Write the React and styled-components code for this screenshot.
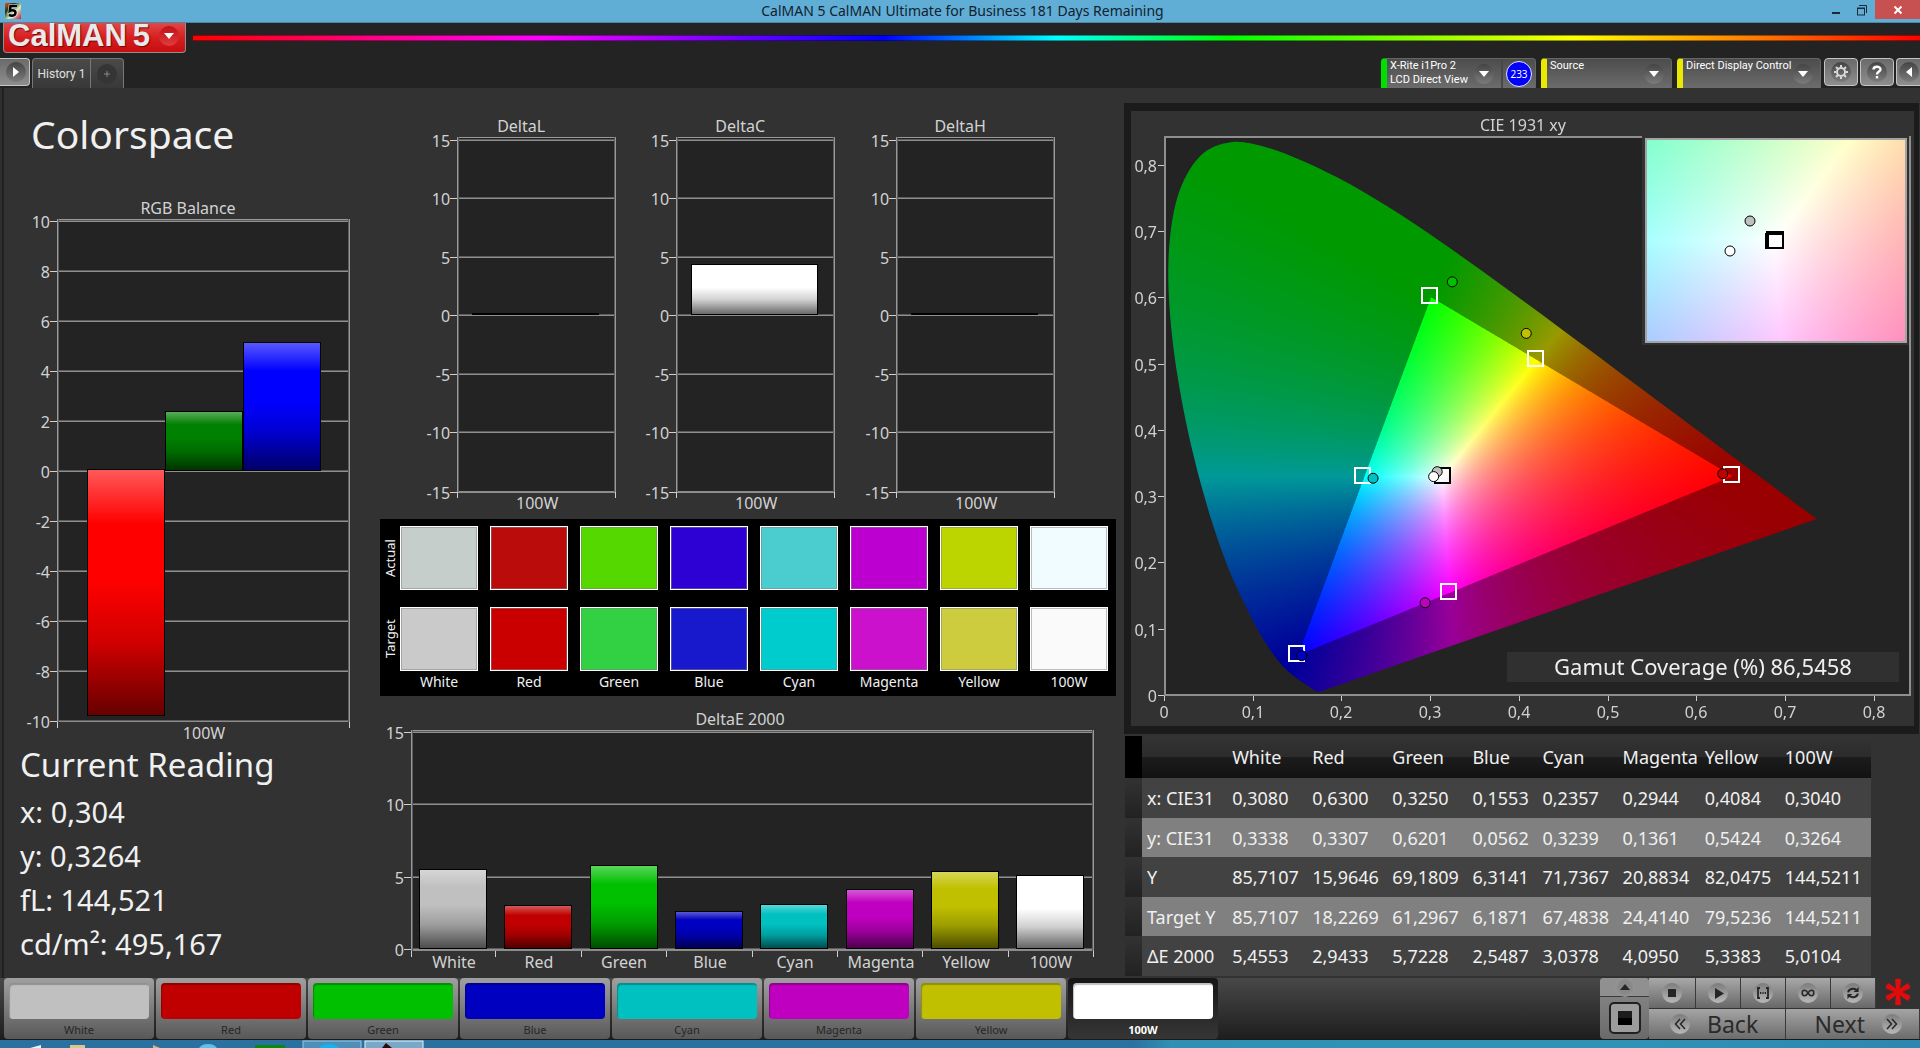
import React, { useEffect, useRef } from "react";
import styled, { createGlobalStyle, css } from "styled-components";

const FONT = '"Noto Sans", "Open Sans", "Liberation Sans", sans-serif';
const COMPACT_FONT = 'Roboto, "Liberation Sans", sans-serif';

const GlobalStyle = createGlobalStyle`
  *, *::before, *::after { box-sizing: border-box; }
  html, body { margin: 0; padding: 0; background: #323232; }
  body { font-family: ${FONT}; color: #f0f0f0; }
  button { font-family: inherit; cursor: pointer; margin: 0; padding: 0; }
  h1, h2, p { margin: 0; font-weight: 400; }
  svg { display: block; }
`;

const Screen = styled.div`
  display: flex;
  flex-direction: column;
  height: 100vh;
  overflow: hidden;
`;

/* ---------- window title bar ---------- */

const TitleBar = styled.div`
  flex: none;
  display: grid;
  grid-template-columns: 1fr auto 1fr;
  height: 23px;
  padding-left: 5px;
  background: #60aed6;
  border-bottom: 1px solid #4a86a6;
  color: #10222e;
  font-size: 14px;
  line-height: 22px;
`;

const AppIcon = styled.svg`
  width: 16px;
  height: 16px;
  margin-top: 3px;
`;

const WindowButtons = styled.div`
  display: flex;
  justify-content: flex-end;
`;

const WindowButton = styled.button`
  display: flex;
  align-items: center;
  justify-content: center;
  width: ${(p) => (p.$close ? 45 : 26)}px;
  height: 19px;
  border: 0;
  background: ${(p) => (p.$close ? "#c75050" : "transparent")};
`;

/* ---------- header ---------- */

const Header = styled.header`
  flex: none;
  height: 65px;
  background: #232323;
`;

const BrandRow = styled.div`
  display: flex;
  height: 30px;
  padding-left: 3px;
`;

const BrandButton = styled.button`
  flex: none;
  display: flex;
  align-items: center;
  justify-content: space-between;
  width: 183px;
  height: 30px;
  padding: 0 6px 3px 4px;
  border: 1px solid #8f8f8f;
  border-top: 0;
  border-radius: 0 0 4px 4px;
  background: linear-gradient(#e04848, #d62020 50%, #c80c10);
`;

const BrandName = styled.span`
  display: flex;
  gap: 6px;
  font-family: "Liberation Sans", Arial, sans-serif;
  font-size: 31px;
  line-height: 26px;
  font-weight: 700;
  color: #e9e9e9;
  white-space: nowrap;
  text-shadow: 1px 1px 1px #6d0a0a;
`;

const Rainbow = styled.div`
  flex: 1;
  height: 6px;
  margin: 12px 0 0 7px;
  border: solid rgba(0, 0, 0, 0.4);
  border-width: 1px 0;
  background: linear-gradient(
    90deg,
    #ff0000 0%,
    #ff00ff 20%,
    #0000ff 40%,
    #00ffff 50%,
    #00ff00 60%,
    #ffff00 80%,
    #ff0000 100%
  );
`;

const ToolRow = styled.div`
  display: flex;
  align-items: flex-start;
  height: 35px;
  padding-top: 5px;
`;

const Disc = styled.span`
  flex: none;
  display: flex;
  align-items: center;
  justify-content: center;
  width: 20px;
  height: 20px;
  border-radius: 50%;
  background: ${(p) => p.$fill || "linear-gradient(#444444, #7c7c7c)"};
`;

const SquareButton = styled.button`
  flex: none;
  display: flex;
  align-items: center;
  justify-content: ${(p) => (p.$edge ? "flex-end" : "center")};
  width: ${(p) => p.$width || 34}px;
  height: 28px;
  padding-right: ${(p) => (p.$edge ? 3 : 0)}px;
  border: 1px solid #c4c4c4;
  border-width: ${(p) => (p.$edge ? "1px 1px 1px 0" : p.$clip ? "1px 0 1px 1px" : "1px")};
  border-radius: ${(p) => (p.$edge ? "0 4px 4px 0" : p.$clip ? "4px 0 0 4px" : "4px")};
  background: linear-gradient(#6a6a6a, #8e8e8e);
`;

const Tabs = styled.nav`
  display: flex;
  height: 30px;
  margin-left: 2px;
  border: 1px solid #777777;
  border-bottom: 0;
  border-radius: 4px 4px 0 0;
  background: linear-gradient(#4a4a4a, #383838);
`;

const TabButton = styled.button`
  display: flex;
  align-items: center;
  justify-content: center;
  width: ${(p) => p.$width}px;
  border: 0;
  border-right: ${(p) => (p.$divided ? "1px solid #777777" : "0")};
  background: none;
  color: #e0e0e0;
  font-family: ${COMPACT_FONT};
  font-size: 12px;
`;

const Spacer = styled.div`
  flex: 1;
  min-width: 0;
`;

const DeviceGroup = styled.div`
  display: flex;
  gap: 5px;
  margin-right: 3px;
`;

const Device = styled.div`
  display: flex;
  width: ${(p) => p.$width}px;
  height: 30px;
  border: 1px solid #666666;
  border-bottom: 0;
  border-left: 6px solid ${(p) => p.$mark};
  border-radius: 4px 4px 0 0;
  background: linear-gradient(#4c4c4c, #6c6c6c);
`;

const DeviceMenu = styled.button`
  flex: 1;
  display: flex;
  align-items: flex-start;
  justify-content: space-between;
  min-width: 0;
  padding: 0 7px 0 3px;
  border: 0;
  background: none;
  color: #ffffff;
  text-align: left;
  font-family: ${COMPACT_FONT};
  font-size: 11px;
  line-height: 14px;
  white-space: nowrap;

  ${Disc} {
    margin-top: 5px;
  }
`;

const MeterBadge = styled.button`
  flex: none;
  display: flex;
  align-items: center;
  justify-content: center;
  width: 34px;
  border: 0;
  border-left: 2px solid #484848;
  background: none;

  span {
    width: 26px;
    height: 26px;
    border: 1px solid #e6e6ff;
    border-radius: 50%;
    background: #0000ff;
    color: #ffffff;
    font-size: 10px;
    line-height: 24px;
    text-align: center;
  }
`;

const EdgeButtons = styled.div`
  display: flex;
  gap: 2px;
`;

/* ---------- main work area ---------- */

const Main = styled.main`
  flex: 1;
  min-height: 0;
  display: grid;
  grid-template-columns: minmax(0, 376fr) minmax(0, 744fr) minmax(0, 796fr);
  align-items: start;
  padding-left: 4px;
  background: #323232;
  box-shadow: inset 2px 0 #2e2e2e, inset 4px 0 #212121;
`;

const Column = styled.section`
  padding-top: ${(p) => p.$top}px;
  padding-right: ${(p) => p.$right || 0}px;
`;

const PageTitle = styled.h1`
  padding-left: 27px;
  margin-bottom: 32px;
  font-size: 39px;
  line-height: 48px;
`;

const Figure = styled.svg`
  width: 100%;
  height: auto;
  font-family: ${FONT};
  font-size: 16px;
`;

const Readings = styled.div`
  padding-left: 16px;
  font-size: 29px;
  line-height: 44px;

  h2 {
    margin-bottom: 5px;
    font-size: 33px;
    line-height: 40px;
  }
`;

const DeltaRow = styled.div`
  display: grid;
  grid-template-columns: repeat(3, minmax(0, 1fr));
  margin: 0 44px 4px 34px;
`;

const SwatchPanel = styled.div`
  display: grid;
  grid-template-columns: 8px repeat(8, minmax(0, 1fr));
  column-gap: 12px;
  padding: 7px 8px 3px 0;
  margin-bottom: 6px;
  background: #000000;
  font-size: 14px;
`;

const SideLabel = styled.span`
  display: flex;
  align-items: center;
  justify-content: center;
  width: 20px;
  height: 64px;
  writing-mode: vertical-rl;
  transform: rotate(180deg);
  font-size: 13px;
`;

const Swatch = styled.div`
  height: 64px;
  margin-bottom: ${(p) => (p.$last ? 0 : 17)}px;
  border: 1px solid #ffffff;
  background: ${(p) => p.$color};
  box-shadow: inset 0 0 0 1px rgba(128, 128, 128, 0.5);
`;

const SwatchName = styled.span`
  line-height: 22px;
  text-align: center;
`;

const CiePanel = styled.div`
  position: relative;
  margin-right: 1px;
  border: solid #1b1b1b;
  border-width: 8px 5px 8px 7px;
  background: #323232;
`;

const CieLayer = styled.canvas`
  position: absolute;
  inset: 0;
  width: 100%;
  height: 100%;
`;

const CieFigure = styled(Figure)`
  position: relative;
`;

const DataTable = styled.table`
  width: calc(100% - 50px);
  margin: 2px 0 0 1px;
  table-layout: fixed;
  border-collapse: collapse;
  font-size: 18px;
  line-height: 24px;
  white-space: nowrap;

  th, td {
    height: 40px;
    padding: 0 0 0 5px;
    font-weight: 400;
    text-align: left;
  }

  thead th {
    height: 42px;
    background: linear-gradient(#333333, #2c2c2c 50%, #1c1c1c 50%, #121212);
  }

  thead td {
    background: #000000;
  }

  tbody tr { background: #424242; }
  tbody tr:nth-child(even) { background: #808080; }
  tbody tr:nth-child(even) > * { height: 39px; }
  tbody td:first-child { background: linear-gradient(#323232, #222222); }
`;

/* ---------- bottom bar ---------- */

const Footer = styled.footer`
  flex: none;
  display: flex;
  height: 62px;
  padding-left: 4px;
  background: linear-gradient(#484848, #1e1e1e);
  border-bottom: 1px solid #1a1a1a;
`;

const PatchList = styled.div`
  display: flex;
  flex: 0 1 1214px;
  gap: 2px;
  min-width: 0;
`;

const PatchButton = styled.button`
  flex: 1;
  min-width: 0;
  padding: 5px 5px 0;
  border: 0;
  border-radius: 4px;
  font-size: 11px;
  line-height: 20px;
  ${(p) =>
    p.$active
      ? css`
          background: linear-gradient(#161616, #363636);
          color: #ffffff;
          font-weight: 700;
        `
      : css`
          background: linear-gradient(#a0a0a0, #585858);
          color: #262626;
        `}
`;

const PatchColor = styled.span`
  display: block;
  height: 36px;
  margin-bottom: 1px;
  border-radius: 4px;
  background: ${(p) => p.$color};
  box-shadow: inset 1px 2px 1px rgba(0, 0, 0, 0.25);
`;

const SourceToggle = styled.div`
  flex: none;
  display: flex;
  flex-direction: column;
  width: 49px;
  border-radius: 4px;
  overflow: hidden;
  background: linear-gradient(#8c8c8c, #6a6a6a);
`;

const ToggleUp = styled.button`
  display: flex;
  align-items: center;
  justify-content: center;
  height: 19px;
  border: 0;
  border-bottom: 1px solid #3a3a3a;
  background: #909090;
`;

const TogglePattern = styled.button`
  display: flex;
  align-items: center;
  justify-content: center;
  align-self: center;
  width: 32px;
  height: 32px;
  margin-top: 5px;
  border: 2px solid #202020;
  border-radius: 5px;
  background: #9c9c9c;
`;

const Transport = styled.div`
  flex: none;
  display: flex;
  flex-direction: column;
  gap: 1px;
  width: 271px;
`;

const TransportTop = styled.div`
  display: grid;
  grid-template-columns: 47px 45px 45px 45px 45px 1fr;
  height: 30px;
  background: #323232;
`;

const TransportButton = styled.button`
  display: flex;
  align-items: center;
  justify-content: center;
  border: 0;
  border-right: 1px solid #3a3a3a;
  background: linear-gradient(#a8a8a8, #686868);
`;

const AlertMark = styled.div`
  display: flex;
  justify-content: center;
`;

const StepRow = styled.div`
  display: grid;
  grid-template-columns: 137px 1fr;
  height: 30px;
`;

const StepButton = styled.button`
  display: flex;
  align-items: center;
  justify-content: ${(p) => (p.$next ? "flex-end" : "flex-start")};
  gap: 17px;
  padding: 0 17px 0 21px;
  border: 0;
  border-right: 1px solid #3a3a3a;
  background: linear-gradient(#a4a4a4, #6c6c6c);
  color: #2a2a2a;
  font-size: 23px;
  line-height: 28px;
`;

const TaskBar = styled.div`
  flex: none;
  height: 8px;
  overflow: hidden;
  background: linear-gradient(90deg, #2a719f 0%, #2a729f 59%, #2f90b4 61%, #3093b6 84%, #2d87b0 100%);
`;

/* ---------- data ---------- */

const PATCHES = [
  { name: "White", color: "#c0c0c0", actual: "#c5ceca", target: "#cacaca", x: "0,3080", y: "0,3338", Y: "85,7107", tY: "85,7107", dE: "5,4553" },
  { name: "Red", color: "#c00000", actual: "#ba0c0a", target: "#ca0000", x: "0,6300", y: "0,3307", Y: "15,9646", tY: "18,2269", dE: "2,9433" },
  { name: "Green", color: "#00c000", actual: "#55d700", target: "#32d043", x: "0,3250", y: "0,6201", Y: "69,1809", tY: "61,2967", dE: "5,7228" },
  { name: "Blue", color: "#0000c0", actual: "#2d00d4", target: "#1818cc", x: "0,1553", y: "0,0562", Y: "6,3141", tY: "6,1871", dE: "2,5487" },
  { name: "Cyan", color: "#00c0c0", actual: "#4bcdd0", target: "#00cccd", x: "0,2357", y: "0,3239", Y: "71,7367", tY: "67,4838", dE: "3,0378" },
  { name: "Magenta", color: "#c000c0", actual: "#bb00cf", target: "#cb11cb", x: "0,2944", y: "0,1361", Y: "20,8834", tY: "24,4140", dE: "4,0950" },
  { name: "Yellow", color: "#c0c000", actual: "#bcd500", target: "#cccc3e", x: "0,4084", y: "0,5424", Y: "82,0475", tY: "79,5236", dE: "5,3383" },
  { name: "100W", color: "#ffffff", actual: "#f0fcff", target: "#fafafa", x: "0,3040", y: "0,3264", Y: "144,5211", tY: "144,5211", dE: "5,0104" },
];

const TABLE_ROWS = [
  ["x: CIE31", "x"],
  ["y: CIE31", "y"],
  ["Y", "Y"],
  ["Target Y", "tY"],
  ["ΔE 2000", "dE"],
];

const COLUMN_WIDTHS = [17, 85, 80, 80, 80, 70, 80, 82, 80, 91];

const num = (s) => parseFloat(s.replace(",", "."));

/* ---------- bar charts ---------- */

function Gloss() {
  return (
    <defs>
      <linearGradient id="gloss" x1="0" y1="0" x2="0" y2="1">
        <stop offset="0" stopColor="#fff" stopOpacity="0.35" />
        <stop offset="0.22" stopColor="#fff" stopOpacity="0" />
        <stop offset="0.45" stopColor="#000" stopOpacity="0" />
        <stop offset="0.7" stopColor="#000" stopOpacity="0.18" />
        <stop offset="1" stopColor="#000" stopOpacity="0.6" />
      </linearGradient>
    </defs>
  );
}

function BarChart({ title, titleX, view, plot, values, zero, unit, bars, barWidth, cats }) {
  const [l, t, r, b] = plot;
  const step = (r - l) / cats.length;
  const y = (v) => Math.round(zero - v * unit);
  return (
    <Figure viewBox={view.join(" ")} role="img" aria-label={title}>
      <Gloss />
      <text x={titleX} y={t - 5} fill="#d2d2d2" textAnchor="middle">{title}</text>
      <g shapeRendering="crispEdges">
        <rect x={l} y={t} width={r - l} height={b - t} fill="#232323" />
        {values.map((v) => (
          <g key={v}>
            <rect x={l} y={y(v) - 1} width={r - l} height="1" fill="#5c5c5c" />
            <rect x={l} y={y(v)} width={r - l} height="1" fill="#8f8f8f" />
            <rect x={l - 7} y={y(v)} width="7" height="1" fill="#d0d0d0" />
          </g>
        ))}
        {bars.map((bar) => {
          const top = bar.value > 0 ? y(bar.value) : y(0) - 1;
          const height = Math.max(Math.abs(y(bar.value) - y(0)), 1);
          return (
            <g key={bar.x}>
              <rect x={bar.x} y={top - 1} width={barWidth} height={height + 1} fill="#000000" />
              {height > 2 && (
                <>
                  <rect x={bar.x + 1} y={top} width={barWidth - 2} height={height - 1} fill={bar.color} />
                  <rect x={bar.x + 1} y={top} width={barWidth - 2} height={height - 1} fill="url(#gloss)" />
                </>
              )}
            </g>
          );
        })}
        <rect x={l} y={t} width={r - l} height="1" fill="#999999" />
        <rect x={l} y={b - 1} width={r - l} height="1" fill="#8c8c8c" />
        <rect x={l} y={t} width="1" height={b - t} fill="#999999" />
        <rect x={l + 1} y={t} width="1" height={b - t} fill="#5c5c5c" />
        <rect x={r - 1} y={t} width="1" height={b - t} fill="#999999" />
        <rect x={r - 2} y={t} width="1" height={b - t} fill="#5c5c5c" />
        {Array.from({ length: cats.length + 1 }, (_, i) => (
          <rect key={i} x={Math.round(l + i * step - (i ? 1 : 0))} y={b} width="1" height="6" fill="#d0d0d0" />
        ))}
      </g>
      <g fill="#d2d2d2">
        {values.map((v) => (
          <text key={v} x={l - 7} y={y(v) + 7} textAnchor="end">{v}</text>
        ))}
        {cats.map((c, i) => (
          <text key={c} x={Math.round(l + (i + 0.5) * step)} y={b + 17} textAnchor="middle">{c}</text>
        ))}
      </g>
    </Figure>
  );
}

const DELTA_VALUES = [15, 10, 5, 0, -5, -10, -15];

function DeltaChart({ title, value }) {
  return (
    <BarChart
      title={title}
      titleX={107}
      view={[0, 112, 219, 402]}
      plot={[43, 137, 202, 491]}
      values={DELTA_VALUES}
      zero={315}
      unit={11.7}
      barWidth={127}
      bars={[{ x: 58, value, color: "#ffffff" }]}
      cats={["100W"]}
    />
  );
}

/* ---------- chromaticity diagram ---------- */

const VIEW = { x: 1131, y: 111, w: 783, h: 615 };
const cx = (x) => 1165 + 887 * x;
const cy = (y) => 695 - 663 * y;

const LOCUS = [
  [0.1741, 0.005], [0.174, 0.005], [0.1733, 0.0048], [0.1726, 0.0048], [0.1714, 0.0051], [0.1689, 0.0069],
  [0.1644, 0.0109], [0.1566, 0.0177], [0.144, 0.0297], [0.1355, 0.0399], [0.1241, 0.0578], [0.1096, 0.0868],
  [0.0913, 0.1327], [0.0687, 0.2007], [0.0454, 0.295], [0.0235, 0.4127], [0.0082, 0.5384], [0.0039, 0.6548],
  [0.0139, 0.7502], [0.0389, 0.812], [0.0743, 0.8338], [0.1142, 0.8262], [0.1547, 0.8059], [0.1929, 0.7816],
  [0.2296, 0.7543], [0.2658, 0.7243], [0.3016, 0.6923], [0.3373, 0.6589], [0.3731, 0.6245], [0.4087, 0.5896],
  [0.4441, 0.5547], [0.4788, 0.5202], [0.5125, 0.4866], [0.5448, 0.4544], [0.5752, 0.4242], [0.6029, 0.3965],
  [0.627, 0.3725], [0.6482, 0.3514], [0.6658, 0.334], [0.6915, 0.3083], [0.7079, 0.292], [0.723, 0.277],
  [0.7347, 0.2653],
];

const INSET = { x: 1647, y: 140, w: 258, h: 201, x0: 0.2872, x1: 0.3388, y0: 0.354, y1: 0.304 };

function chromaColor(x, y) {
  const X = x / y;
  const Z = (1 - x - y) / y;
  let r = 3.2406 * X - 1.5372 - 0.4986 * Z;
  let g = -0.9689 * X + 1.8758 + 0.0415 * Z;
  let b = 0.0557 * X - 0.204 + 1.057 * Z;
  const dim = Math.min(r, g, b) < 0 ? 0.6 : 1;
  r = Math.max(r, 0);
  g = Math.max(g, 0);
  b = Math.max(b, 0);
  const k = (255 * dim) / Math.max(r, g, b);
  return [r * k, g * k, b * k];
}

function paintField(w, h, toXY) {
  const canvas = document.createElement("canvas");
  canvas.width = w;
  canvas.height = h;
  const ctx = canvas.getContext("2d");
  const image = ctx.createImageData(w, h);
  for (let j = 0; j < h; j += 1) {
    for (let i = 0; i < w; i += 1) {
      const [x, y] = toXY(i + 0.5, j + 0.5);
      const [r, g, b] = chromaColor(x, Math.max(y, 0.001));
      const o = (j * w + i) * 4;
      image.data[o] = r;
      image.data[o + 1] = g;
      image.data[o + 2] = b;
      image.data[o + 3] = 255;
    }
  }
  ctx.putImageData(image, 0, 0);
  return canvas;
}

function drawDiagram(canvas) {
  const ctx = canvas.getContext("2d");
  ctx.clearRect(0, 0, VIEW.w, VIEW.h);
  ctx.save();
  ctx.translate(-VIEW.x, -VIEW.y);
  ctx.fillStyle = "#232323";
  ctx.fillRect(1165, 137, 745, 558);

  const field = paintField(VIEW.w * 2, VIEW.h * 2, (i, j) => [
    (i / 2 + VIEW.x - 1165) / 887,
    (695 - (j / 2 + VIEW.y)) / 663,
  ]);
  const pts = LOCUS.map(([x, y]) => [cx(x), cy(y)]);
  ctx.save();
  ctx.beginPath();
  ctx.moveTo(pts[0][0], pts[0][1]);
  for (let i = 1; i < pts.length - 1; i += 1) {
    const p0 = pts[i - 1];
    const p1 = pts[i];
    const p2 = pts[i + 1];
    const pm = pts[Math.max(i - 2, 0)];
    ctx.bezierCurveTo(
      p0[0] + (p1[0] - pm[0]) / 6,
      p0[1] + (p1[1] - pm[1]) / 6,
      p1[0] - (p2[0] - p0[0]) / 6,
      p1[1] - (p2[1] - p0[1]) / 6,
      p1[0],
      p1[1]
    );
  }
  const last = pts[pts.length - 1];
  ctx.lineTo(last[0], last[1]);
  ctx.closePath();
  ctx.clip();
  ctx.drawImage(field, VIEW.x, VIEW.y, VIEW.w, VIEW.h);
  ctx.restore();

  ctx.fillStyle = "#323232";
  ctx.fillRect(1642, 136, 269, 209);
  ctx.fillStyle = "#a4a4a4";
  ctx.fillRect(INSET.x - 2, INSET.y - 2, INSET.w + 4, INSET.h + 4);
  const inset = paintField(INSET.w, INSET.h, (i, j) => [
    INSET.x0 + (i / INSET.w) * (INSET.x1 - INSET.x0),
    INSET.y0 + (j / INSET.h) * (INSET.y1 - INSET.y0),
  ]);
  ctx.drawImage(inset, INSET.x, INSET.y);
  ctx.restore();
}

const TARGETS = [
  [0.64, 0.33], [0.3, 0.6], [0.15, 0.06], [0.2246, 0.3287], [0.3209, 0.1542], [0.4193, 0.5053],
];

function CieChart() {
  const ref = useRef(null);
  useEffect(() => {
    if (ref.current) drawDiagram(ref.current);
  }, []);
  const ticks = [0, 1, 2, 3, 4, 5, 6, 7, 8];
  const label = (n) => (n === 0 ? "0" : `0,${n}`);
  return (
    <CiePanel>
      <CieLayer ref={ref} width={VIEW.w} height={VIEW.h} aria-hidden="true" />
      <CieFigure viewBox={`${VIEW.x} ${VIEW.y} ${VIEW.w} ${VIEW.h}`} role="img" aria-label="CIE 1931 xy">
        <text x="1523" y="131" fill="#d2d2d2" textAnchor="middle">CIE 1931 xy</text>
        <g shapeRendering="crispEdges">
          <path d="M1164 137H1642M1165 136V696M1910 136V696M1164 695H1911" fill="none" stroke="#8f8f8f" strokeWidth="2" />
          {ticks.map((n) => (
            <g key={n} fill="#d0d0d0">
              <rect x="1158" y={Math.round(695 - 66.3 * n)} width="6" height="1" />
              <rect x={Math.round(1164 + 88.7 * n)} y="696" width="1" height="5" />
            </g>
          ))}
        </g>
        <g fill="#d2d2d2">
          {ticks.map((n) => (
            <g key={n}>
              <text x="1157" y={Math.round(702 - 66.3 * n)} textAnchor="end">{label(n)}</text>
              <text x={Math.round(1164 + 88.7 * n)} y="718" textAnchor="middle">{label(n)}</text>
            </g>
          ))}
        </g>
        <rect x="1507" y="652" width="392" height="30" fill="#303030" />
        <text x="1703" y="675" fontSize="22" fill="#f0f0f0" textAnchor="middle">Gamut Coverage (%) 86,5458</text>
        <g fill="none" stroke="#ffffff" strokeWidth="2">
          {TARGETS.map(([x, y]) => (
            <rect key={x} x={Math.round(cx(x)) - 9} y={Math.round(cy(y)) - 9} width="15" height="15" />
          ))}
        </g>
        <rect x="1435" y="468" width="15" height="15" fill="#ffffff" fillOpacity="0.5" stroke="#000000" strokeWidth="2" />
        {PATCHES.map((p) => (
          <circle key={p.name} cx={cx(num(p.x)) - 1} cy={cy(num(p.y)) - 2} r="5" fill={p.color} stroke="#000000" />
        ))}
        <g fill="none" stroke="#000000" strokeWidth="2">
          <rect x="1767" y="232" width="16" height="15" fill="#999999" />
          <rect x="1766" y="234" width="16" height="14" />
          <rect x="1768" y="234" width="15" height="14" fill="#ffffff" stroke="#000000" />
        </g>
        <circle cx="1750" cy="221" r="5" fill="#c0c0c0" stroke="#000000" />
        <circle cx="1730" cy="251" r="5" fill="#ffffff" stroke="#000000" />
      </CieFigure>
    </CiePanel>
  );
}

/* ---------- icons ---------- */

const Triangle = ({ dir = "down", color = "#ffffff", size = 10 }) => {
  const d = { down: "M0 2H10L5 8Z", up: "M0 8H10L5 2Z", right: "M2 0V10L8 5Z", left: "M8 0V10L2 5Z" }[dir];
  return (
    <svg width={size} height={size} viewBox="0 0 10 10" aria-hidden="true">
      <path d={d} fill={color} />
    </svg>
  );
};

const GearIcon = () => (
  <svg width="16" height="16" viewBox="0 0 16 16" fill="none" stroke="#d8d8d8" aria-hidden="true">
    <circle cx="8" cy="8" r="4" strokeWidth="2" />
    <path d="M8 1V3M8 13V15M1 8H3M13 8H15M3 3L5 5M11 11L13 13M3 13L5 11M11 5L13 3" strokeWidth="2" />
  </svg>
);

const HelpIcon = () => (
  <svg width="12" height="14" viewBox="0 0 12 14" fill="none" stroke="#ffffff" strokeWidth="2.4" aria-hidden="true">
    <path d="M2.5 4.5C2.5 0.8 9.5 0.8 9.5 4.4C9.5 6.6 6 6.6 6 9.4" />
    <path d="M6 11V13.4" />
  </svg>
);

const Icon14 = ({ children }) => (
  <svg width="14" height="14" viewBox="0 0 14 14" fill="none" stroke="#262626" strokeWidth="1.8" aria-hidden="true">
    {children}
  </svg>
);

const SilverDisc = "linear-gradient(#7c7c7c, #b8b8b8)";

const TRANSPORT = [
  ["Stop", <Icon14 key="s"><rect x="3" y="3" width="8" height="8" fill="#262626" stroke="none" /></Icon14>],
  ["Play", <Icon14 key="p"><path d="M4 2V13L13 7.5Z" fill="#262626" stroke="none" /></Icon14>],
  ["Series", <Icon14 key="b"><path d="M4 2H2V12H4M10 2H12V12H10M4 7H5.3M6.4 7H7.6M8.7 7H10" /></Icon14>],
  ["Continuous", <Icon14 key="c"><path d="M7 7C5.5 4.6 4.6 4.3 3.6 4.3C0.4 4.3 0.4 9.7 3.6 9.7C4.6 9.7 5.5 9.4 7 7C8.5 4.6 9.4 4.3 10.4 4.3C13.6 4.3 13.6 9.7 10.4 9.7C9.4 9.7 8.5 9.4 7 7Z" strokeWidth="1.5" /></Icon14>],
  ["Refresh", <Icon14 key="r"><path d="M2.2 6.4C2.6 3 7.5 1.6 10.4 4M11.8 7.6C11.4 11 6.5 12.4 3.6 10" strokeWidth="2" /><path d="M12.6 1V6H7.6ZM1.4 13V8H6.4Z" fill="#262626" stroke="none" /></Icon14>],
];

export default function App() {
  return (
    <Screen>
      <GlobalStyle />
      <TitleBar>
        <AppIcon viewBox="0 0 16 16" aria-hidden="true">
          <defs>
            <linearGradient id="app" x1="0" y1="0" x2="1" y2="1">
              <stop offset="0" stopColor="#ff4a20" />
              <stop offset="0.3" stopColor="#1c3a12" />
              <stop offset="0.6" stopColor="#d8f0c0" />
              <stop offset="1" stopColor="#d0104a" />
            </linearGradient>
          </defs>
          <rect width="16" height="16" fill="url(#app)" />
          <path d="M12 3H5.5L4.8 8C7 6.8 10.8 7 10.5 10C10.2 13 6.5 13.2 4 12" fill="none" stroke="#ffffff" strokeWidth="4" strokeOpacity="0.7" />
          <path d="M12 3H5.5L4.8 8C7 6.8 10.8 7 10.5 10C10.2 13 6.5 13.2 4 12" fill="none" stroke="#000000" strokeWidth="2.5" />
        </AppIcon>
        <span>CalMAN 5 CalMAN Ultimate for Business 181 Days Remaining</span>
        <WindowButtons>
          <WindowButton aria-label="Minimize">
            <svg width="10" height="10"><rect x="1" y="7" width="8" height="2" fill="#1e2a30" /></svg>
          </WindowButton>
          <WindowButton aria-label="Restore">
            <svg width="12" height="12" viewBox="0 0 12 12" fill="none" stroke="#1e2a30">
              <path d="M3 1.5H10.5V9" />
              <rect x="1.5" y="4" width="7" height="7" />
              <path d="M1 4.5H9" />
            </svg>
          </WindowButton>
          <WindowButton $close aria-label="Close">
            <svg width="10" height="10" viewBox="0 0 10 10"><path d="M1.5 1.5L8.5 8.5M8.5 1.5L1.5 8.5" stroke="#fff" strokeWidth="2" /></svg>
          </WindowButton>
        </WindowButtons>
      </TitleBar>

      <Header>
        <BrandRow>
          <BrandButton>
            <BrandName><span>CalMAN</span><span>5</span></BrandName>
            <Disc $fill="linear-gradient(#c01018, #e23c3c)"><Triangle /></Disc>
          </BrandButton>
          <Rainbow />
        </BrandRow>
        <ToolRow>
          <SquareButton $edge $width={30} aria-label="Expand"><Disc><Triangle dir="right" /></Disc></SquareButton>
          <Tabs>
            <TabButton $width={58} $divided>History 1</TabButton>
            <TabButton $width={32} aria-label="Add history">
              <Disc $fill="#353535">
                <svg width="8" height="8"><path d="M4 1V7M1 4H7" stroke="#8a8a8a" /></svg>
              </Disc>
            </TabButton>
          </Tabs>
          <Spacer />
          <DeviceGroup>
            <Device $width={155} $mark="#00e000">
              <DeviceMenu>
                <span>X-Rite i1Pro 2<br />LCD Direct View</span>
                <Disc><Triangle /></Disc>
              </DeviceMenu>
              <MeterBadge><span>233</span></MeterBadge>
            </Device>
            <Device $width={131} $mark="#eaea00">
              <DeviceMenu><span>Source</span><Disc><Triangle /></Disc></DeviceMenu>
            </Device>
            <Device $width={144} $mark="#eaea00">
              <DeviceMenu><span>Direct Display Control</span><Disc><Triangle /></Disc></DeviceMenu>
            </Device>
          </DeviceGroup>
          <EdgeButtons>
            <SquareButton aria-label="Settings"><Disc><GearIcon /></Disc></SquareButton>
            <SquareButton aria-label="Help"><Disc><HelpIcon /></Disc></SquareButton>
            <SquareButton $clip $width={24} aria-label="Collapse"><Disc><Triangle dir="left" /></Disc></SquareButton>
          </EdgeButtons>
        </ToolRow>
      </Header>

      <Main>
        <Column $top={22}>
          <PageTitle>Colorspace</PageTitle>
          <BarChart
            title="RGB Balance"
            titleX={188}
            view={[4, 190, 376, 555]}
            plot={[57, 219, 350, 722]}
            values={[10, 8, 6, 4, 2, 0, -2, -4, -6, -8, -10]}
            zero={471}
            unit={25}
            barWidth={78}
            bars={[
              { x: 87, value: -9.85, color: "#ff0000" },
              { x: 165, value: 2.35, color: "#008000" },
              { x: 243, value: 5.12, color: "#0000ff" },
            ]}
            cats={["100W"]}
          />
          <Readings>
            <h2>Current Reading</h2>
            <p>x: 0,304</p>
            <p>y: 0,3264</p>
            <p>fL: 144,521</p>
            <p>cd/m²: 495,167</p>
          </Readings>
        </Column>

        <Column $top={24} $right={8}>
          <DeltaRow>
            <DeltaChart title="DeltaL" value={0} />
            <DeltaChart title="DeltaC" value={4.25} />
            <DeltaChart title="DeltaH" value={0} />
          </DeltaRow>
          <SwatchPanel>
            <SideLabel>Actual</SideLabel>
            {PATCHES.map((p) => <Swatch key={p.name} $color={p.actual} />)}
            <SideLabel>Target</SideLabel>
            {PATCHES.map((p) => <Swatch key={p.name} $color={p.target} $last />)}
            <span />
            {PATCHES.map((p) => <SwatchName key={p.name}>{p.name}</SwatchName>)}
          </SwatchPanel>
          <BarChart
            title="DeltaE 2000"
            titleX={740}
            view={[380, 702, 736, 272]}
            plot={[411, 730, 1094, 951]}
            values={[15, 10, 5, 0]}
            zero={949}
            unit={14.48}
            barWidth={68}
            bars={PATCHES.map((p, i) => ({ x: Math.round(419 + i * 85.3), value: num(p.dE), color: p.color }))}
            cats={PATCHES.map((p) => p.name)}
          />
        </Column>

        <Column $top={15}>
          <CieChart />
          <DataTable>
            <colgroup>
              {COLUMN_WIDTHS.map((w, i) => <col key={i} style={{ width: w }} />)}
            </colgroup>
            <thead>
              <tr>
                <td />
                <th aria-label="Value" />
                {PATCHES.map((p) => <th key={p.name} scope="col">{p.name}</th>)}
              </tr>
            </thead>
            <tbody>
              {TABLE_ROWS.map(([label, key]) => (
                <tr key={key}>
                  <td />
                  <th scope="row">{label}</th>
                  {PATCHES.map((p) => <td key={p.name}>{p[key]}</td>)}
                </tr>
              ))}
            </tbody>
          </DataTable>
        </Column>
      </Main>

      <Footer>
        <PatchList>
          {PATCHES.map((p) => (
            <PatchButton key={p.name} $active={p.name === "100W"}>
              <PatchColor $color={p.color} />
              {p.name}
            </PatchButton>
          ))}
        </PatchList>
        <Spacer />
        <SourceToggle>
          <ToggleUp aria-label="Show patterns">
            <Disc $fill="radial-gradient(#888888 0 45%, #a4a4a4)">
              <Triangle dir="up" color="#262626" size={10} />
            </Disc>
          </ToggleUp>
          <TogglePattern aria-label="Pattern window">
            <svg width="14" height="14">
              <rect width="14" height="7" fill="#1c1c1c" />
              <rect y="7" width="14" height="7" fill="#000000" />
            </svg>
          </TogglePattern>
        </SourceToggle>
        <Transport>
          <TransportTop>
            {TRANSPORT.map(([name, icon]) => (
              <TransportButton key={name} aria-label={name}>
                <Disc $fill={SilverDisc}>{icon}</Disc>
              </TransportButton>
            ))}
            <AlertMark>
              <svg width="28" height="28" viewBox="0 0 28 28" aria-hidden="true">
                <g fill="#e00c0c">
                  {[0, 60, 120, 180, 240, 300].map((a) => (
                    <path key={a} d="M12.4 14L11 2C11 0.4 17 0.4 17 2L15.6 14Z" transform={`rotate(${a} 14 14)`} />
                  ))}
                </g>
              </svg>
            </AlertMark>
          </TransportTop>
          <StepRow>
            <StepButton>
              <Disc $fill={SilverDisc}>
                <Icon14><path d="M7 2L2.5 7L7 12M12 2L7.5 7L12 12" strokeWidth="1.5" /></Icon14>
              </Disc>
              Back
            </StepButton>
            <StepButton $next>
              Next
              <Disc $fill={SilverDisc}>
                <Icon14><path d="M2 2L6.5 7L2 12M7 2L11.5 7L7 12" strokeWidth="1.5" /></Icon14>
              </Disc>
            </StepButton>
          </StepRow>
        </Transport>
      </Footer>

      <TaskBar>
        <svg width="430" height="8" viewBox="0 0 430 8" aria-hidden="true">
          <path d="M30 8L41 5V8Z" fill="#e8f2f8" />
          <rect x="70" y="5" width="15" height="3" fill="#d8c890" />
          <path d="M153 5L160 8H153Z" fill="#e0b080" />
          <ellipse cx="208" cy="9" rx="9" ry="5" fill="#5ec0ec" />
          <rect x="255" y="5" width="30" height="3" fill="#0a8a0a" />
          <rect x="303" y="1" width="58" height="9" fill="#4e8fb8" stroke="#9cc8e0" />
          <ellipse cx="329" cy="9" rx="10" ry="5" fill="#12b4f4" />
          <rect x="365" y="1" width="58" height="9" fill="#78a8c8" stroke="#e8f4fa" />
          <path d="M382 8L386 3L392 8Z" fill="#2c0a0e" />
        </svg>
      </TaskBar>
    </Screen>
  );
}
